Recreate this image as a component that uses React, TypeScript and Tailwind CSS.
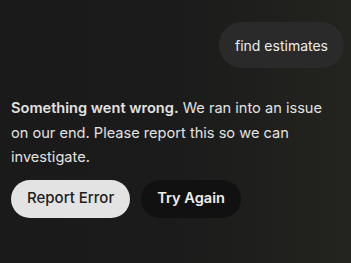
import React from "react";

export default function App() {
  return (
    <div
      className="w-[351px] h-[263px] overflow-hidden bg-gradient-to-r from-[#1a1a1a] via-[#1b1b1b] to-[#23231f] text-[#e6e6e6]"
      style={{ fontFamily: "Inter, 'Noto Sans', sans-serif" }}
    >
      <div className="flex justify-end pt-[22px] pr-[7px]">
        <div className="h-[46px] px-4 rounded-full bg-[#2a2a2a] flex items-center text-[14px] text-[#ececec]">
          find estimates
        </div>
      </div>
      <p className="mt-[28px] px-[11px] text-[14.6px] leading-[24.5px] text-[#e2e2e2]">
        <span className="font-semibold">Something went wrong.</span> We ran into an issue on our end. Please report this so we can investigate.
      </p>
      <div className="flex gap-[11px] px-[11px] mt-[10px]">
        <button className="h-[38px] px-4 rounded-full bg-[#e3e3e3] text-[#1c1c1c] text-[15px] font-medium">
          Report Error
        </button>
        <button className="h-[38px] px-4 rounded-full bg-[#111111] text-[#ededed] text-[14.6px] font-semibold">
          Try Again
        </button>
      </div>
    </div>
  );
}
